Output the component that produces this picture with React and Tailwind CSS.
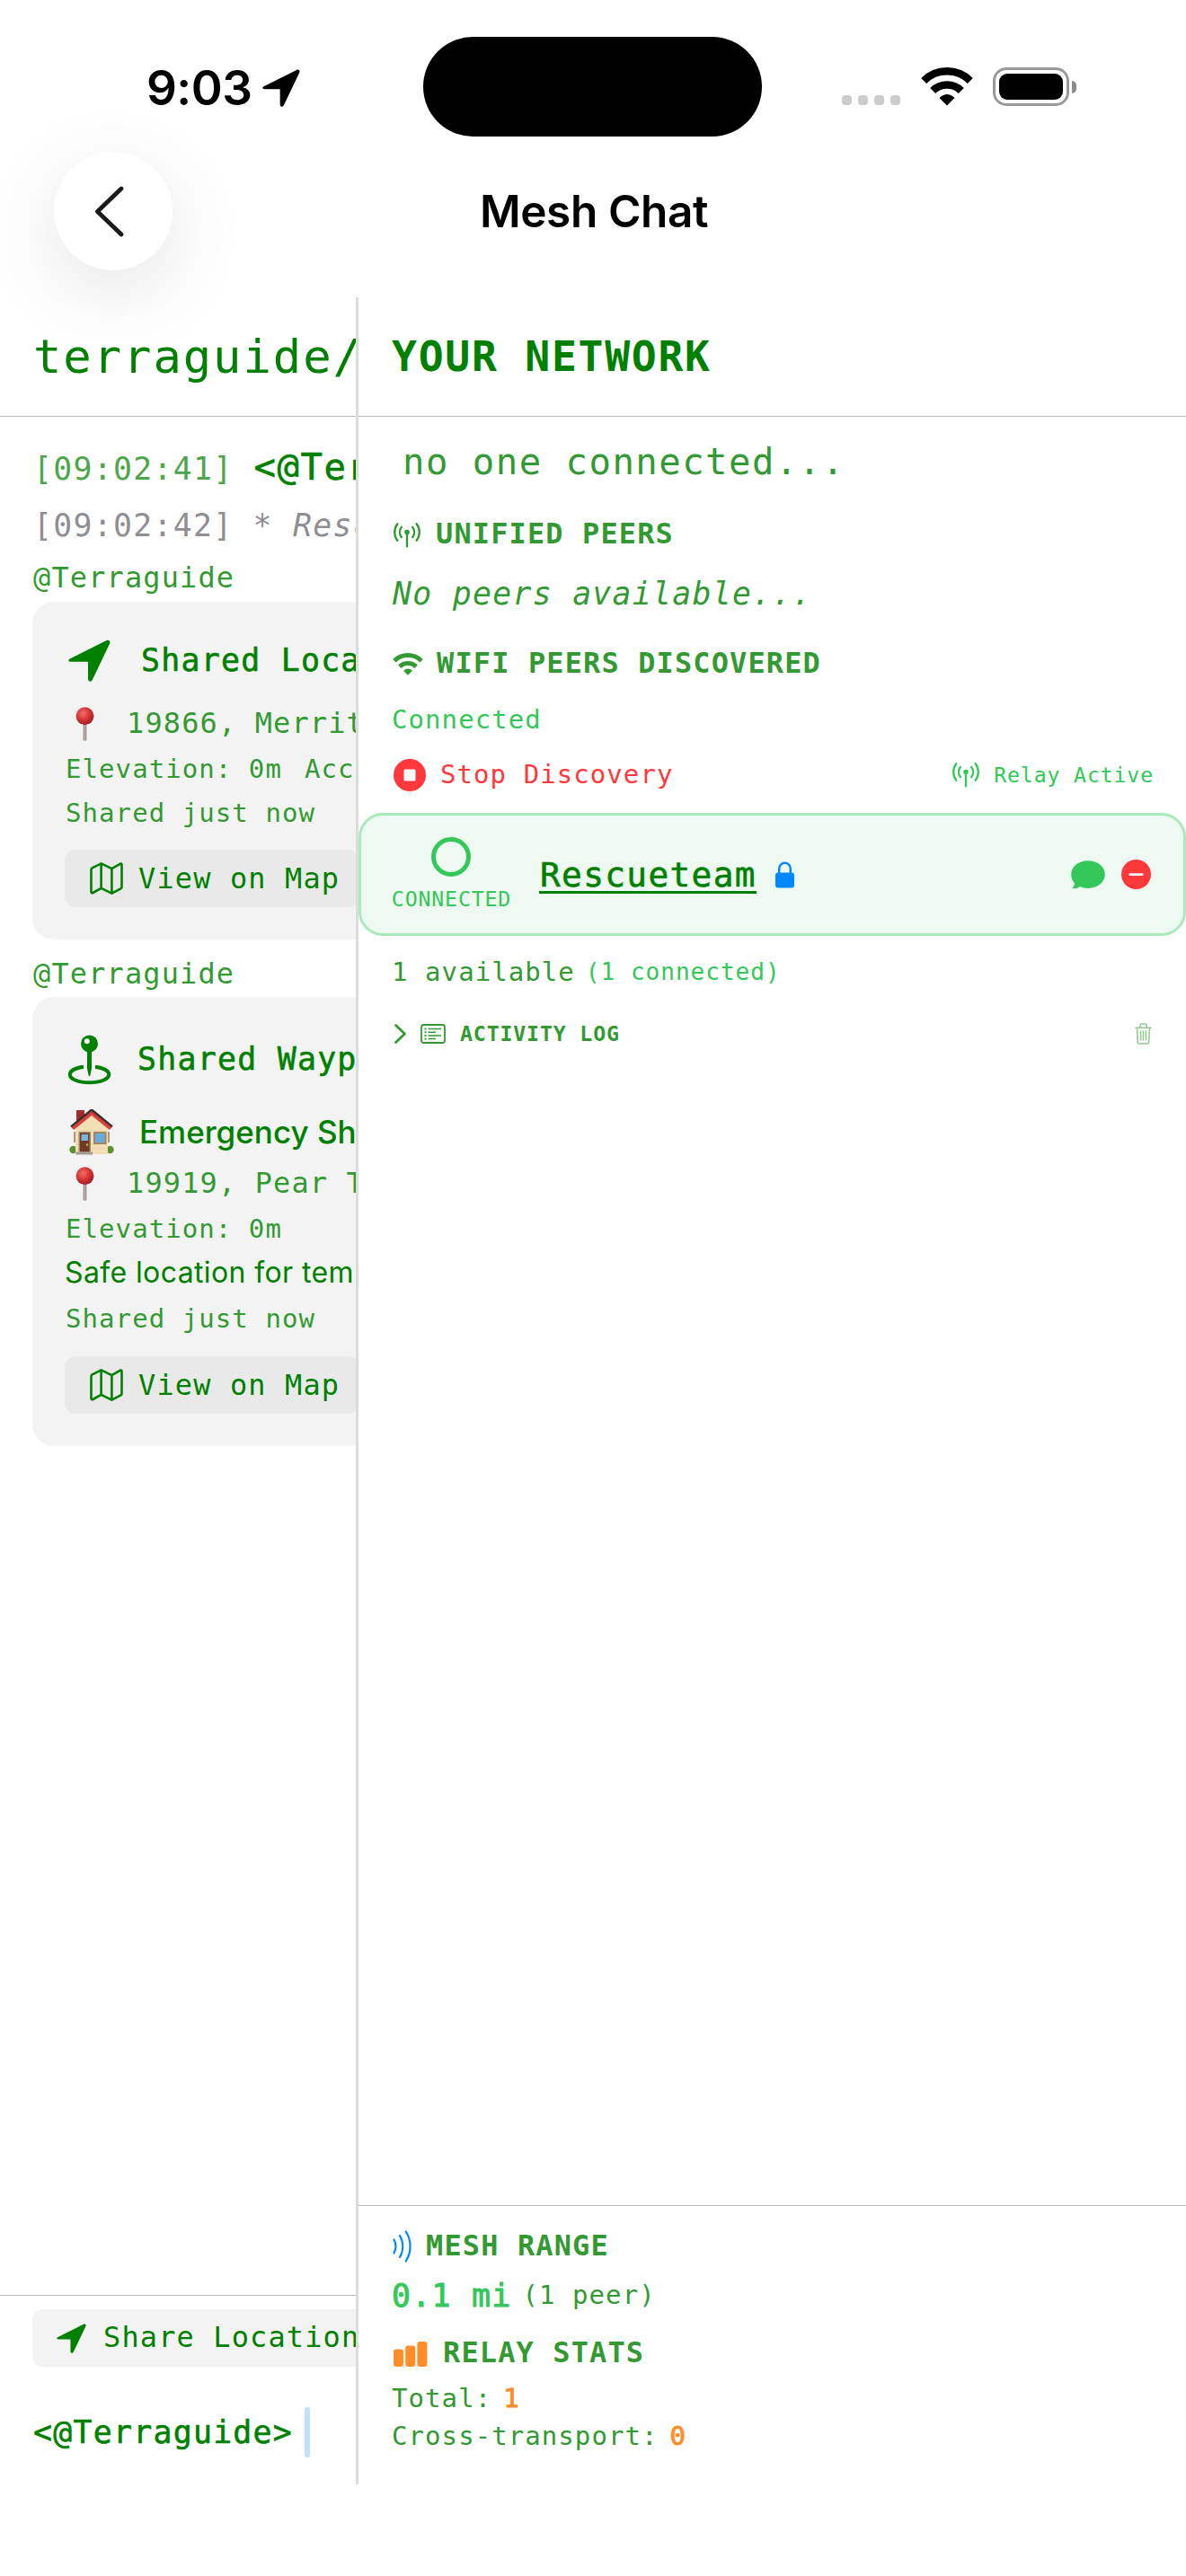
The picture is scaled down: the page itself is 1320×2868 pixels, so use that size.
import React from "react";

const MONO =
  "font-['DejaVu_Sans_Mono',monospace] tracking-[0.037em] whitespace-pre indent-px";
const MEDIUM = "[-webkit-text-stroke:0.6px_currentColor]";

function LocationArrow({ className }) {
  return (
    <svg className={className} viewBox="0 0 47 47" fill="currentColor">
      <path d="M2.2 21.2 42.6 1C45.300-.2 47.300 1.800 46.100 4.400L26.800 44.900C25.400 47.800 22 46.900 22 43.800V25.600Q22 24.800 21.200 24.800H3.100C-.1 24.800-.9 22.700 2.200 21.200Z" />
    </svg>
  );
}

function Wifi({ className }) {
  return (
    <svg className={className} viewBox="0 0 58 43" fill="none">
      <path d="M3.200 15A36.500 36.500 0 0 1 54.800 15" stroke="currentColor" strokeWidth="8.500" />
      <path d="M13.200 26A22.500 22.500 0 0 1 44.800 26" stroke="currentColor" strokeWidth="8.500" />
      <path d="M29 42.500 20.500 34Q29 26 37.500 34Z" fill="currentColor" />
    </svg>
  );
}

function Antenna({ className }) {
  return (
    <svg className={className} viewBox="0 0 32 28" fill="none" stroke="currentColor" strokeWidth="2.300" strokeLinecap="round">
      <path d="M5.300 1.200A15.500 15.500 0 0 0 5.300 19.800M26.700 1.200A15.500 15.500 0 0 1 26.700 19.800M9.800 5A9 9 0 0 0 9.800 16M22.200 5A9 9 0 0 1 22.200 16M16 12V26.500" />
      <circle cx="16" cy="10.500" r="2.800" fill="currentColor" stroke="none" />
    </svg>
  );
}

function MapIcon({ className }) {
  return (
    <svg className={className} viewBox="0 0 37 36" fill="none" stroke="currentColor" strokeWidth="2.600" strokeLinejoin="round">
      <path d="M1.500 8.200Q1.500 7 2.600 6.400L12.600 1.300 24.400 7.200 33.600 1.800Q35.500 1 35.500 3V27.600Q35.500 28.800 34.400 29.400L24.400 34.700 12.600 28.800 3.400 34Q1.500 34.800 1.500 32.800ZM12.600 1.300V28.800M24.400 7.200V34.700" />
    </svg>
  );
}

function Pushpin() {
  return (
    <svg className="ml-[12px] h-[38px] w-[21px] shrink-0" viewBox="0 0 21 38">
      <defs>
        <radialGradient id="pinHead" cx="0.4" cy="0.35" r="0.65">
          <stop offset="0" stopColor="#f0706c" />
          <stop offset="0.5" stopColor="#dc3a3a" />
          <stop offset="1" stopColor="#9c1f26" />
        </radialGradient>
      </defs>
      <rect x="8.700" y="17" width="3.600" height="20.500" rx="1" fill="#8d7f7b" />
      <rect x="9.900" y="19" width="1.200" height="18" fill="#cfc6c2" />
      <circle cx="10.500" cy="10.200" r="9.900" fill="url(#pinHead)" />
    </svg>
  );
}

function WaypointPin() {
  return (
    <svg className="h-[56px] w-[47px] shrink-0" viewBox="0 0 47 56" fill="none">
      <path d="M17 35.700C7.500 37 1.800 40.300 1.800 44.300 1.800 49.600 11.500 53.200 23.500 53.200S45.200 49.600 45.200 44.300C45.200 40.300 39.500 37 30 35.700" stroke="currentColor" strokeWidth="4" />
      <path d="M21 17H26V38L24.300 45.500Q23.500 47 22.700 45.500L21 38Z" fill="currentColor" />
      <circle cx="23.500" cy="10" r="9.500" fill="currentColor" />
      <circle cx="20.800" cy="7.200" r="3" fill="#f3f3f3" />
    </svg>
  );
}

function House() {
  return (
    <svg className="ml-px h-[51px] w-[50px] shrink-0" viewBox="0 0 50 51">
      <rect x="5" y="25" width="3" height="12" fill="#b5957a" />
      <rect x="42" y="25" width="3" height="12" fill="#b5957a" />
      <circle cx="4.500" cy="45" r="4.200" fill="#5f8f33" />
      <circle cx="45.500" cy="45" r="4.200" fill="#5f8f33" />
      <path d="M7 20 25 4 43 20V50H7Z" fill="#f2dfb6" />
      <path d="M8 24H42M8 29H42M8 34H42M8 39H42M8 44H42" stroke="#e6d0a2" strokeWidth="0.700" />
      <path d="M8 1H17V10L8 18Z" fill="#a32c28" />
      <path d="M2.500 20 25 1.500 47.500 20" stroke="#35302f" strokeWidth="4" fill="none" />
      <path d="M4 21.500 25 4.500 46 21.500" stroke="#d8403a" strokeWidth="3.600" fill="none" />
      <rect x="10.500" y="25" width="13.500" height="22.500" fill="#a08764" />
      <rect x="12" y="26.500" width="10.500" height="21" fill="#6f3a26" />
      <rect x="13.500" y="28" width="7.500" height="7" fill="#7ab4e4" />
      <circle cx="20" cy="39.500" r="1.200" fill="#e8b93c" />
      <rect x="27" y="25" width="14.500" height="14" fill="#a08764" />
      <rect x="29" y="27" width="10.500" height="10" fill="#6aa9dd" />
      <rect x="7.500" y="47.500" width="18.500" height="3" fill="#a39c95" />
    </svg>
  );
}

function MapButton() {
  return (
    <div className="flex h-[64px] w-[328px] items-center rounded-[12px] bg-[#e9e9e9] pl-[28px]">
      <MapIcon className="h-[36px] w-[37px]" />
      <span className={`${MONO} ml-[16px] text-[31.9px] leading-[40px]`}>View on Map</span>
    </div>
  );
}

function StatusBar() {
  return (
    <div className="flex h-[152px] items-end">
      <div className="flex h-[111px] w-[471px] items-center pl-[163px]">
        <span className="mt-[3px] w-[117px] font-['Inter',sans-serif] text-[53px] leading-none font-semibold tracking-[-0.01em] whitespace-nowrap">9:03</span>
        <LocationArrow className="mt-[3px] ml-[12px] h-[42px] w-[42px]" />
      </div>
      <div className="h-[111px] w-[377px] rounded-full bg-black" />
      <div className="flex h-[111px] flex-1 items-center pl-[89px]">
        <div className="mt-[30px] flex gap-[7px]">
          {[0, 1, 2, 3].map((i) => (
            <div key={i} className="h-[11px] w-[11px] rounded-[4px] bg-[#cccccc]" />
          ))}
        </div>
        <Wifi className="ml-[23px] h-[43px] w-[58px]" />
        <div className="ml-[22px] h-[43px] w-[85px] rounded-[15px] border-[3px] border-[#999999] p-[4px]">
          <div className="h-full w-full rounded-[9px] bg-black" />
        </div>
        <div className="ml-[3px] h-[14px] w-[5px] rounded-r-full bg-[#8c8c8c]" />
      </div>
    </div>
  );
}

function NavBar() {
  return (
    <div className="flex h-[179px] items-start pt-[17px] pl-[60px]">
      <div className="flex h-[132px] w-[132px] items-center justify-center rounded-full bg-white shadow-[0_24px_90px_rgba(0,0,0,0.11)]">
        <svg className="mr-[9px] h-[57px] w-[33px]" viewBox="0 0 33 57" fill="none" stroke="#1a1a1a" strokeWidth="4.800" strokeLinecap="round" strokeLinejoin="round">
          <path d="M30 3 3.500 28.500 30 54" />
        </svg>
      </div>
      <h1 className="mr-[190px] flex h-[132px] flex-1 items-center justify-center font-['Inter',sans-serif] text-[49.500px] font-semibold tracking-[-0.008em] whitespace-nowrap">
        Mesh Chat
      </h1>
    </div>
  );
}

function Chat() {
  return (
    <section className="flex w-[396px] flex-col overflow-hidden text-[#008000]">
      <div className={`${MONO} flex h-[132px] items-center pl-[36px] text-[52.2px]`}>terraguide/</div>
      <div className="h-px bg-[#b8b8b8]" />
      <div className="flex h-[2091px] flex-col pl-[36px]">
        <div className="mt-[32px] flex h-[48px] items-baseline">
          <span className={`${MONO} text-[34.8px] leading-[48px] text-[#4da64d]`}>[09:02:41] </span>
          <span className={`${MONO} ${MEDIUM} text-[40.6px] leading-[48px]`}>&lt;@Terraguide&gt;</span>
        </div>
        <div className={`${MONO} mt-[17px] h-[48px] text-[34.8px] leading-[48px] text-[#8e8e93]`}>
          [09:02:42] <span className="italic">* Rescueteam</span>
        </div>
        <div className={`${MONO} mt-[14px] h-[40px] text-[31.9px] leading-[40px] text-[#339933]`}>@Terraguide</div>

        <article className="mt-[7px] h-[376px] w-[900px] rounded-[24px] bg-[#f3f3f3] pt-[41px] pl-[36px]">
          <div className="flex h-[48px] items-center pl-[4px]">
            <LocationArrow className="h-[47px] w-[47px]" />
            <span className={`${MONO} ${MEDIUM} ml-[33px] text-[34.8px]`}>Shared Location</span>
          </div>
          <div className="mt-[27px] flex h-[40px] items-center text-[#339933]">
            <Pushpin />
            <span className={`${MONO} ml-[35px] text-[31.9px]`}>19866, Merritt</span>
          </div>
          <div className="mt-[13px] flex h-[36px] items-center gap-[24px] text-[#339933]">
            <span className={`${MONO} text-[29px]`}>Elevation: 0m</span>
            <span className={`${MONO} text-[29px]`}>Accuracy</span>
          </div>
          <div className={`${MONO} mt-[12px] mb-[23px] h-[36px] text-[29px] leading-[36px] text-[#339933]`}>Shared just now</div>
          <MapButton />
        </article>

        <div className={`${MONO} mt-[18px] h-[40px] text-[31.9px] leading-[40px] text-[#339933]`}>@Terraguide</div>

        <article className="mt-[6px] h-[500px] w-[900px] rounded-[24px] bg-[#f3f3f3] pt-[42px] pl-[36px]">
          <div className="flex h-[56px] items-center pl-[4px]">
            <WaypointPin />
            <span className={`${MONO} ${MEDIUM} mb-[2px] ml-[29px] text-[34.8px]`}>Shared Waypoint</span>
          </div>
          <div className="mt-[26px] flex h-[52px] items-center pl-[4px]">
            <House />
            <span className="ml-[28px] font-['Inter',sans-serif] text-[35px] font-medium whitespace-nowrap">Emergency Shelter</span>
          </div>
          <div className="mt-[12px] flex h-[40px] items-center text-[#339933]">
            <Pushpin />
            <span className={`${MONO} ml-[35px] text-[31.9px]`}>19919, Pear Tree</span>
          </div>
          <div className={`${MONO} mt-[12px] h-[36px] text-[29px] leading-[36px] text-[#339933]`}>Elevation: 0m</div>
          <div className="mt-[11px] h-[40px] font-['Inter',sans-serif] text-[32px] leading-[40px] tracking-[0.012em] whitespace-nowrap">Safe location for temporary</div>
          <div className={`${MONO} mt-[13px] mb-[24px] h-[36px] text-[29px] leading-[36px] text-[#339933]`}>Shared just now</div>
          <MapButton />
        </article>
      </div>
      <div className="h-px bg-[#b8b8b8]" />
      <div className="mt-[15px] ml-[36px] flex h-[64px] w-[500px] items-center rounded-[12px] bg-[#f3f3f3] pl-[27px]">
        <LocationArrow className="h-[33px] w-[33px]" />
        <span className={`${MONO} ml-[18px] text-[31.9px]`}>Share Location</span>
      </div>
      <div className="mt-[45px] ml-[36px] flex h-[56px] items-center">
        <span className={`${MONO} ${MEDIUM} text-[34.8px]`}>&lt;@Terraguide&gt;</span>
        <div className="ml-[13px] h-[56px] w-[6px] rounded-full bg-[#bfe0ff]" />
      </div>
    </section>
  );
}

function PeerRow() {
  return (
    <div className="mt-[24px] flex h-[137px] items-center rounded-[27px] border-[3px] border-[#a8eaba] bg-[#eef9f1] pr-[36px] pl-[33px] text-[#34c759]">
      <div className="flex w-[134px] flex-col items-center pt-[3px]">
        <div className="h-[44px] w-[44px] rounded-full border-[5px] border-[#34c759]" />
        <span className={`${MONO} mt-[8px] text-[23.2px] leading-[34px]`}>CONNECTED</span>
      </div>
      <span className={`${MONO} ${MEDIUM} mb-[3px] ml-[31px] h-[45px] border-b-[3px] border-[#008000] text-[37.7px] leading-[48px] text-[#008000]`}>Rescueteam</span>
      <svg className="ml-[21px] h-[30px] w-[21px]" viewBox="0 0 21 30" fill="none">
        <path d="M4.200 14V8A6.300 6.300 0 0 1 16.800 8V14" stroke="#0088ff" strokeWidth="2.400" />
        <rect y="12.500" width="21" height="17" rx="3" fill="#0088ff" />
      </svg>
      <svg className="ml-auto h-[32px] w-[38px]" viewBox="0 0 38 32" fill="#34c759">
        <path d="M19 .3C29.500.3 37.800 6.800 37.800 15.600S29.500 31 19 31C15.500 31 12.500 30.300 9.800 29 7.500 30.600 5 31.500 2.500 31.200 1.400 31 1.700 30 2.400 29.300 3.600 28.200 4 26.700 3.800 25.200 1.500 22.500.2 19.200.2 15.600.2 6.800 8.500.3 19 .3Z" />
      </svg>
      <svg className="ml-[18px] h-[33px] w-[33px]" viewBox="0 0 33 33">
        <circle cx="16.500" cy="16.500" r="16.500" fill="#ff383c" />
        <rect x="8.500" y="15.200" width="16" height="2.800" rx="1.300" fill="#fff" />
      </svg>
    </div>
  );
}

function Network() {
  return (
    <section className="flex w-[921px] flex-col text-[#339933]">
      <h2 className={`${MONO} flex h-[132px] items-center pt-[2px] pl-[36px] text-[46.4px] font-bold text-[#008000]`}>YOUR NETWORK</h2>
      <div className="h-px bg-[#b8b8b8]" />
      <div className="flex h-[1991px] flex-col">
        <div className={`${MONO} mt-[26px] pl-[48px] text-[40.6px] leading-[48px]`}>no one connected...</div>
        <div className="mt-[37px] flex h-[40px] items-center pl-[38px]">
          <Antenna className="mt-[2px] h-[28px] w-[32px]" />
          <span className={`${MONO} ml-[15px] text-[31.9px] font-bold`}>UNIFIED PEERS</span>
        </div>
        <div className={`${MONO} mt-[22px] h-[48px] pl-[37px] text-[34.8px] leading-[48px] italic`}>No peers available...</div>
        <div className="mt-[34px] flex h-[40px] items-center pl-[38px]">
          <Wifi className="h-[25px] w-[34px]" />
          <span className={`${MONO} ml-[14px] text-[31.9px] font-bold`}>WIFI PEERS DISCOVERED</span>
        </div>
        <div className={`${MONO} mt-[24px] h-[36px] pl-[36px] text-[29px] leading-[36px] text-[#34c759]`}>Connected</div>
        <div className="mt-[26px] flex h-[36px] items-center pr-[36px] pl-[39px]">
          <svg className="h-[36px] w-[36px]" viewBox="0 0 36 36">
            <circle cx="18" cy="18" r="18" fill="#ff383c" />
            <rect x="11.500" y="11.500" width="13" height="13" rx="1.500" fill="#fff" />
          </svg>
          <span className={`${MONO} ml-[15px] text-[29px] text-[#ff383c]`}>Stop Discovery</span>
          <Antenna className="ml-auto h-[28px] w-[32px] text-[#34c759]" />
          <span className={`${MONO} ml-[14px] text-[23.2px] text-[#34c759]`}>Relay Active</span>
        </div>
        <PeerRow />
        <div className="mt-[23px] flex h-[36px] items-center pl-[36px]">
          <span className={`${MONO} text-[29px]`}>1 available</span>
          <span className={`${MONO} ml-[11px] text-[26.1px] text-[#34c759]`}>(1 connected)</span>
        </div>
        <div className="mt-[32px] flex h-[36px] items-center pr-[38px] pl-[40px]">
          <svg className="h-[22px] w-[13px]" viewBox="0 0 13 22" fill="none" stroke="currentColor" strokeWidth="2.800" strokeLinecap="round" strokeLinejoin="round">
            <path d="M1.600 1.500 11.400 11 1.600 20.500" />
          </svg>
          <svg className="ml-[16px] h-[22px] w-[28px]" viewBox="0 0 28 22" fill="none" stroke="currentColor">
            <rect x="1" y="1" width="26" height="20" rx="2.500" strokeWidth="1.800" />
            <path d="M8.500 5.500H23M8.500 9.200H17M8.500 12.900H23M8.500 16.600H17" strokeWidth="1.500" />
            <path d="M4.500 5.500H6.500M4.500 9.200H6.500M4.500 12.900H6.500M4.500 16.600H6.500" strokeWidth="2" />
          </svg>
          <span className={`${MONO} ml-[15px] text-[23.2px] font-bold`}>ACTIVITY LOG</span>
          <svg className="ml-auto h-[24px] w-[19px] text-[#8fcb8f]" viewBox="0 0 19 24" fill="none" stroke="currentColor" strokeWidth="1.500">
            <path d="M.5 5.200H18.500M6 5V2.500Q6 1 7.500 1H11.500Q13 1 13 2.500V5M2.500 5.500 3.300 21.200Q3.400 23 5 23H14Q15.600 23 15.700 21.200L16.500 5.500M6.600 8.500V19.500M9.500 8.500V19.500M12.400 8.500V19.500" />
          </svg>
        </div>
      </div>
      <div className="h-px bg-[#b8b8b8]" />
      <div className="flex flex-col pl-[36px]">
        <div className="mt-[25px] flex h-[40px] items-center pl-[2px]">
          <svg className="h-[36px] w-[23px] text-[#0088ff]" viewBox="0 0 23 36" fill="none" stroke="currentColor" strokeWidth="2.200" strokeLinecap="round">
            <path d="M1.500 10.500A16 16 0 0 1 1.500 25.500M8 6A24 24 0 0 1 8 30M14.800 1.500A31 31 0 0 1 14.800 34.500" />
          </svg>
          <span className={`${MONO} ml-[13px] text-[31.9px] font-bold`}>MESH RANGE</span>
        </div>
        <div className="mt-[11px] flex h-[48px] items-center">
          <span className={`${MONO} text-[34.8px] text-[#34c759] [-webkit-text-stroke:1px_currentColor]`}>0.1 mi</span>
          <span className={`${MONO} ml-[11px] text-[29px]`}>(1 peer)</span>
        </div>
        <div className="mt-[20px] flex h-[40px] items-center pl-[3px]">
          <svg className="mt-[2px] h-[28px] w-[38px]" viewBox="0 0 38 28" fill="#ff8d28">
            <rect y="8.500" width="11" height="19.500" rx="3" />
            <rect x="13.200" y="4.500" width="11" height="23.500" rx="3" />
            <rect x="26.400" width="11" height="28" rx="3" />
          </svg>
          <span className={`${MONO} ml-[16px] text-[31.9px] font-bold`}>RELAY STATS</span>
        </div>
        <div className="mt-[13px] flex h-[36px] items-center gap-[12px]">
          <span className={`${MONO} text-[29px]`}>Total:</span>
          <span className={`${MONO} text-[29px] text-[#ff8d28] [-webkit-text-stroke:1px_currentColor]`}>1</span>
        </div>
        <div className="mt-[6px] flex h-[36px] items-center gap-[12px]">
          <span className={`${MONO} text-[29px]`}>Cross-transport:</span>
          <span className={`${MONO} text-[29px] text-[#ff8d28] [-webkit-text-stroke:1px_currentColor]`}>0</span>
        </div>
      </div>
    </section>
  );
}

export default function App() {
  return (
    <main className="h-[2868px] w-[1320px] overflow-hidden bg-white text-black">
      <StatusBar />
      <NavBar />
      <div className="flex h-[2435px]">
        <Chat />
        <div className="w-[3px] bg-[#dcdcdc]" />
        <Network />
      </div>
    </main>
  );
}
